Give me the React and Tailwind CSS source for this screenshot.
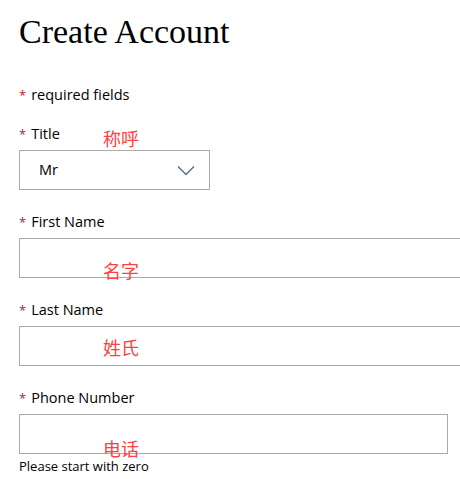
import React from "react";

const sans = { fontFamily: "'Open Sans', 'Noto Sans', sans-serif" };

function Req() {
  return <span className="text-[#c8102e] text-[13px] mr-[5px] align-top">*</span>;
}

function Note({ children, className }) {
  return (
    <span
      className={`absolute text-[18px] leading-none text-[#ff4040] ${className}`}
      style={{ fontFamily: "'Noto Sans CJK SC', sans-serif" }}
    >
      {children}
    </span>
  );
}

function Field({ label, width, note, noteClass, children }) {
  return (
    <div className="relative">
      <div className="h-[20px] text-[14.5px] leading-[20px] text-black">
        <Req />
        {label}
      </div>
      <div
        className={`mt-[6px] h-[40px] border border-[#ababab] bg-white ${width}`}
      >
        {children}
      </div>
      <Note className={noteClass}>{note}</Note>
    </div>
  );
}

export default function App() {
  return (
    <div className="w-[460px] h-[479px] overflow-hidden bg-white" style={sans}>
      <div className="pl-[19px] pt-[14px]">
        <h1
          className="text-[34px] leading-[36px] text-black"
          style={{ fontFamily: "'Liberation Serif', serif" }}
        >
          Create Account
        </h1>

        <div className="mt-[35px] h-[20px] text-[14.5px] leading-[20px] text-black">
          <Req />
          required fields
        </div>

        <div className="mt-[19px] flex flex-col gap-[22px]">
          <Field
            label="Title"
            width="w-[191px]"
            note="称呼"
            noteClass="left-[84px] top-[5px]"
          >
            <div className="flex h-full items-center justify-between pl-[19px] pr-[14px] text-[14.5px]">
              <span>Mr</span>
              <svg width="18" height="11" viewBox="0 0 18 11" fill="none">
                <path d="M1 1.5 9 9.5 17 1.5" stroke="#4f6a85" strokeWidth="1.3" />
              </svg>
            </div>
          </Field>

          <Field
            label="First Name"
            width="w-[460px]"
            note="名字"
            noteClass="left-[84px] top-[49px]"
          />

          <Field
            label="Last Name"
            width="w-[460px]"
            note="姓氏"
            noteClass="left-[84px] top-[38px]"
          />

          <div className="relative">
            <div className="h-[20px] text-[14.5px] leading-[20px] text-black">
              <Req />
              Phone Number
            </div>
            <div className="mt-[6px] h-[40px] w-[429px] border border-[#ababab] bg-white" />
            <div className="mt-[3px] text-[13px] leading-[18px] text-black">
              Please start with zero
            </div>
            <Note className="left-[84px] top-[51px]">电话</Note>
          </div>
        </div>
      </div>
    </div>
  );
}
